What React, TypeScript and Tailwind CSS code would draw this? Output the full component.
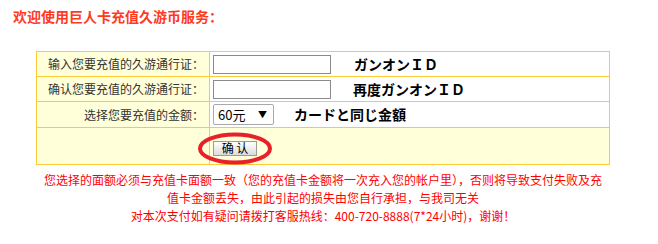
import React from 'react'

const cjk = "font-['SimSun','Noto_Sans_CJK_SC',sans-serif]"

const Label = ({ children }: { children: React.ReactNode }) => (
  <td className="h-[25px] w-[173px] border border-[#fcc937] bg-[#ffffd9] pr-[5px] text-right text-[12px] text-[#333]">
    {children}
  </td>
)

export default function App() {
  return (
    <div className={`${cjk} w-[658px] h-[244px] bg-white pt-[8px]`}>
      <h1 className="pl-[13px] text-[14px] leading-[16px] font-bold text-[#ff3a1f]">欢迎使用巨人卡充值久游币服务：</h1>
      <div className="ml-[36px] mt-[27px] w-[574px]">
        <table className="w-full border-collapse border border-[#fcc937]">
          <tbody>
            <tr>
              <Label>输入您要充值的久游通行证：</Label>
              <td className="border border-[#fcc937] bg-white pl-[3px]">
                <div className="flex items-center">
                  <input className="h-[19px] w-[118px] border border-[#8a8a8a] bg-white" />
                  <span className="ml-[23px] text-[14px] font-bold text-black">ガンオンＩＤ</span>
                </div>
              </td>
            </tr>
            <tr>
              <Label>确认您要充值的久游通行证：</Label>
              <td className="border border-[#fcc937] bg-white pl-[3px]">
                <div className="flex items-center">
                  <input className="h-[19px] w-[118px] border border-[#8a8a8a] bg-white" />
                  <span className="ml-[22px] text-[14px] font-bold text-black">再度ガンオンＩＤ</span>
                </div>
              </td>
            </tr>
            <tr>
              <td className="h-[26px] border border-[#fcc937] bg-[#ffffd9] pr-[5px] text-right text-[12px] text-[#333]">选择您要充值的金额：</td>
              <td className="border border-[#fcc937] bg-white pl-[3px]">
                <div className="flex items-center">
                  <div className="flex h-[21px] w-[61px] items-center justify-between rounded-[2px] border border-[#a9a9a9] bg-white pl-[4px] pr-[6px] text-[13px] text-black">
                    <span>60元</span>
                    <span className="text-[9px]">▼</span>
                  </div>
                  <span className="ml-[20px] text-[14px] font-bold text-black">カードと同じ金額</span>
                </div>
              </td>
            </tr>
            <tr>
              <td className="h-[37px] border border-[#fcc937] bg-[#ffffd9]"></td>
              <td className="border border-[#fcc937] bg-[#ffffd9] pl-[3px]">
                <div className="relative inline-block">
                  <button className="flex h-[15px] w-[44px] items-center justify-center border border-[#9a9a9a] bg-gradient-to-b from-white to-[#dcdcdc] text-[12px] leading-none text-black">
                    确 认
                  </button>
                  <svg className="absolute left-[-16px] top-[-9px]" width="76" height="33" viewBox="0 0 76 33">
                    <ellipse cx="38" cy="16.5" rx="35" ry="14" fill="none" stroke="#e8202a" strokeWidth="4" />
                  </svg>
                </div>
              </td>
            </tr>
          </tbody>
        </table>
        <div className="mt-[6px] text-center text-[12px] leading-[18px] text-[#ff0000]">
          <p className="px-[4px]">您选择的面额必须与充值卡面额一致（您的充值卡金额将一次充入您的帐户里），否则将导致支付失败及充值卡金额丢失，由此引起的损失由您自行承担，与我司无关</p>
          <p>对本次支付如有疑问请拨打客服热线：400-720-8888(7*24小时)，谢谢！</p>
        </div>
      </div>
    </div>
  )
}
